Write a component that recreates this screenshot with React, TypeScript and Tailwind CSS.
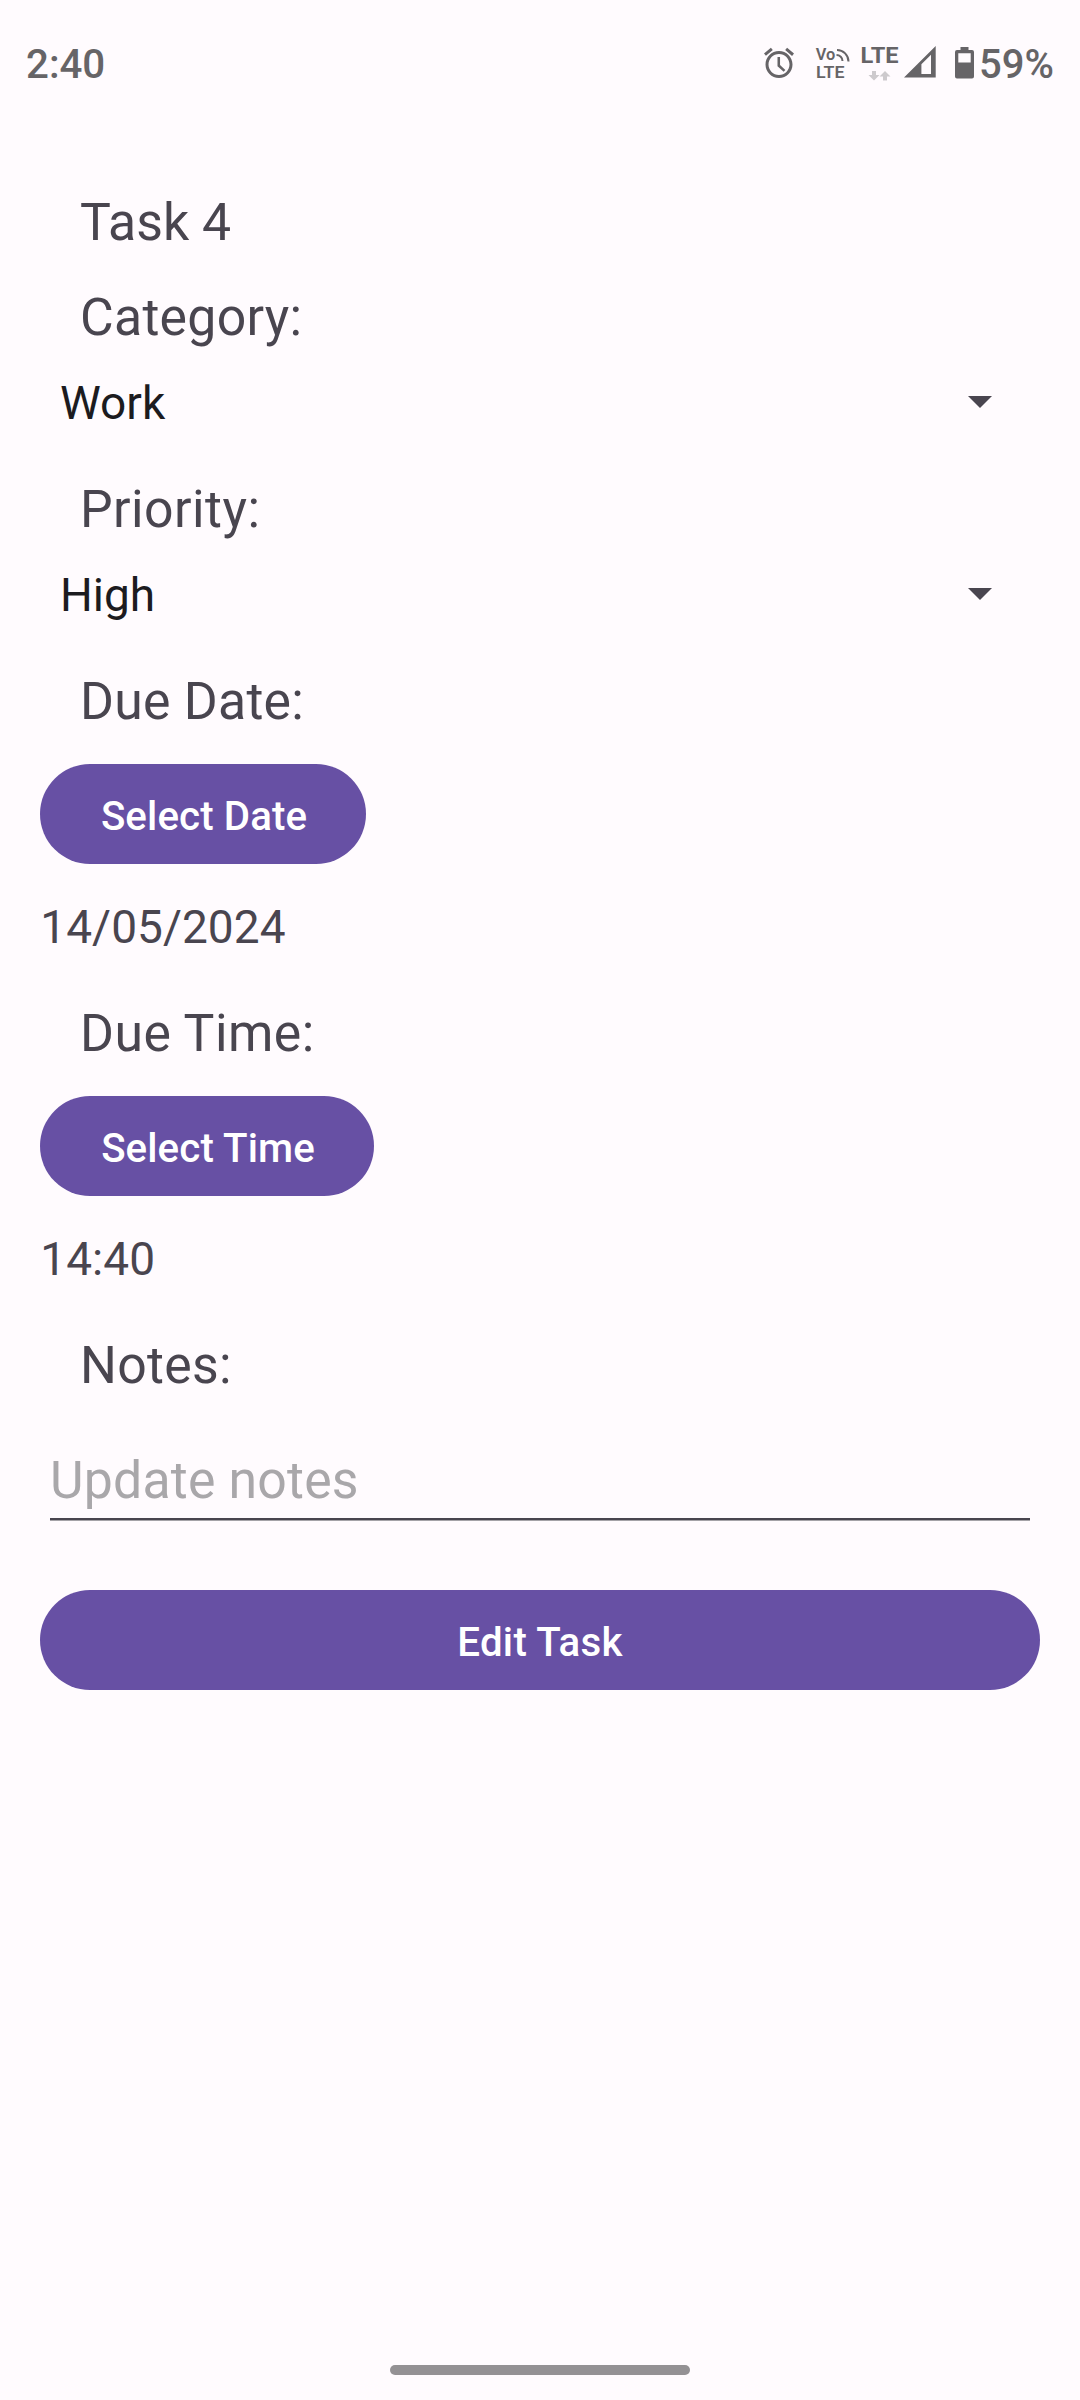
import type { ReactNode } from "react";

function AlarmIcon() {
  return (
    <svg className="h-9 w-9 shrink-0" viewBox="0 0 24 24" fill="currentColor">
      <path d="M22 5.72l-4.6-3.86-1.29 1.53 4.6 3.86L22 5.72zM7.88 3.39L6.6 1.86 2 5.71l1.29 1.53 4.59-3.85zM12.7 8H11v6.1l4.1 3.8 1.15-1.2-3.55-3.35V8zM12 4c-4.97 0-9 4.03-9 9s4.02 9 9 9c4.97 0 9-4.03 9-9s-4.03-9-9-9zm0 16c-3.87 0-7-3.13-7-7s3.13-7 7-7 7 3.13 7 7-3.13 7-7 7z" />
    </svg>
  );
}

function VolteIcon() {
  return (
    <svg className="h-9 w-9 shrink-0 overflow-visible" viewBox="0 0 36 36" fill="currentColor">
      <text x="0.7" y="15" fontSize="16" fontWeight="600" textLength="19.5" lengthAdjust="spacingAndGlyphs">Vo</text>
      <text x="1" y="32.6" fontSize="16.5" fontWeight="600" textLength="28.5" lengthAdjust="spacingAndGlyphs">LTE</text>
      <g fill="none" stroke="currentColor" strokeWidth="2">
        <path d="M21.5 10a6 6 0 0 1 6 6" />
        <path d="M22 5a11.500 11.500 0 0 1 11.500 11.500" />
      </g>
    </svg>
  );
}

function LteIcon() {
  return (
    <svg className="h-9 w-10 shrink-0 overflow-visible" viewBox="0 0 40 36" fill="currentColor">
      <text x="-0.5" y="17.8" fontSize="22.5" fontWeight="700" textLength="38" lengthAdjust="spacingAndGlyphs">LTE</text>
      <g fill="#cdcacd">
        <path d="M11 26h4v4h3.500L13 35.500 7.500 30H11z" />
        <path d="M22 35.500h4v-4h3.500L24 26l-5.500 5.500H22z" />
      </g>
    </svg>
  );
}

function SignalIcon() {
  return (
    <svg className="h-8 w-8 shrink-0" viewBox="0 0 32 32" fill="currentColor">
      <path fillRule="evenodd" d="M0 31.5L31.7 0v31.5zM17.4 28H27V8.7L17.4 18.3z" />
    </svg>
  );
}

function BatteryIcon() {
  return (
    <svg className="h-8 w-[19px] shrink-0" viewBox="0 0 19 32" fill="currentColor">
      <path
        fillRule="evenodd"
        d="M5.500 0h8v3H17a2 2 0 0 1 2 2v24.500a2 2 0 0 1-2 2H2a2 2 0 0 1-2-2V5a2 2 0 0 1 2-2h3.500zM3.300 6.200v9.300h12.400V6.200z"
      />
    </svg>
  );
}

function StatusBar() {
  return (
    <header className="flex h-[88px] items-start justify-between pl-[26px] pr-[26px] pt-[41px] text-[40.25px] font-medium leading-[47px] text-[#666467]">
      <span>2:40</span>
      <div className="flex items-start">
        <div className="mr-[18px] mt-1"><AlarmIcon /></div>
        <div className="mr-[10px] mt-1"><VolteIcon /></div>
        <div className="mr-[3px] mt-1"><LteIcon /></div>
        <div className="mr-[19px] mt-[5px]"><SignalIcon /></div>
        <div className="mr-[5.500px] mt-[5.500px]"><BatteryIcon /></div>
        <span className="text-[40px]">59%</span>
      </div>
    </header>
  );
}

function Label({ children, className }: { children: ReactNode; className: string }) {
  return (
    <div className={`pl-10 text-[51.75px] leading-[61px] text-[#49454f] ${className}`}>{children}</div>
  );
}

function Spinner({ value }: { value: string }) {
  return (
    <div className="mt-[25px] flex h-[60px] items-center justify-between pl-5 pr-12 text-[46px] leading-[54px] text-[#1c1b1f]">
      <span>{value}</span>
      <svg className="mb-[2px] h-3 w-6 text-[#49454f]" viewBox="0 0 24 12" fill="currentColor">
        <path d="M0 0h24L12 12z" />
      </svg>
    </div>
  );
}

function PillButton({ children, className }: { children: ReactNode; className: string }) {
  return (
    <button
      type="button"
      className={`flex h-[100px] items-center justify-center rounded-full bg-[#6750a4] pt-[5px] text-[40.25px] font-medium leading-[47px] text-white ${className}`}
    >
      {children}
    </button>
  );
}

function Value({ children }: { children: ReactNode }) {
  return (
    <div className="mt-9 pl-[0.3px] text-[46px] leading-[54px] tracking-[0.05px] text-[#49454f]">{children}</div>
  );
}

export default function App() {
  return (
    <div className="flex h-[2400px] w-[1080px] flex-col bg-[#fffbfe] font-['Roboto',sans-serif]">
      <StatusBar />
      <main className="flex grow flex-col px-10 pt-[104px]">
        <Label className="tracking-normal">Task 4</Label>
        <Label className="mt-[34px] tracking-[0.28px]">Category:</Label>
        <Spinner value="Work" />
        <Label className="mt-[46px] tracking-[0.45px]">Priority:</Label>
        <Spinner value="High" />
        <Label className="mt-[46px] tracking-[0.25px]">Due Date:</Label>
        <PillButton className="mt-8 w-[326px] pl-[2px] tracking-[0.1px]">Select Date</PillButton>
        <Value>14/05/2024</Value>
        <Label className="mt-[49px] tracking-[0.45px]">Due Time:</Label>
        <PillButton className="mt-8 w-[334px] pl-[2px] tracking-[0.1px]">Select Time</PillButton>
        <Value>14:40</Value>
        <Label className="mt-[49px] tracking-[0.3px]">Notes:</Label>
        <div className="mx-[10px] mt-[54px] pb-[7px] text-[51.75px] leading-[61px] tracking-[0.2px] text-[#a9a7aa]">
          Update notes
        </div>
        <div className="mx-[10px] h-[3px] border-b border-[#a4a2a7] bg-[#49454f]" />
        <PillButton className="mt-[69px] w-full tracking-[0.25px]">Edit Task</PillButton>
      </main>
      <footer className="flex justify-center pb-[25px]">
        <div className="h-[10px] w-[300px] rounded-full bg-[#949194]" />
      </footer>
    </div>
  );
}
